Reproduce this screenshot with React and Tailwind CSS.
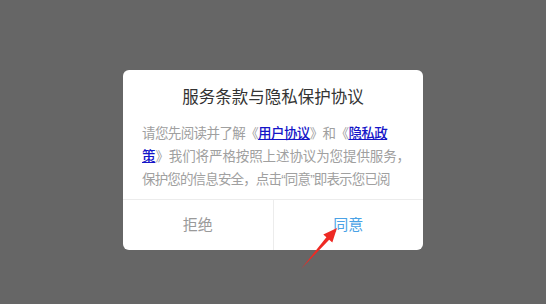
const Link = ({ children }) => (
  <a className="text-[#1515c8] underline font-medium">{children}</a>
);

export default function App() {
  return (
    <div
      className="relative h-[304px] w-full overflow-hidden bg-[#666666] pt-[70px] flex justify-center"
      style={{ fontFamily: '"Liberation Sans", "Noto Sans CJK SC", sans-serif' }}
    >
      <div className="w-[300px] h-[180px] bg-white rounded-[6px] flex flex-col overflow-hidden">
        <h2 className="pt-[15px] text-center text-[16.5px] leading-[24px] text-[#333333] font-normal">
          服务条款与隐私保护协议
        </h2>

        <div className="mt-[13px] h-[69px] overflow-hidden pl-[19px] pr-[8px] text-[13.5px] leading-[23px] text-[#a0a0a0] whitespace-nowrap">
          <p className="tracking-[-0.6px]">
            请您先阅读并了解《<Link>用户协议</Link>》和《<Link>隐私政</Link>
          </p>
          <p className="tracking-[-0.1px]">
            <Link>策</Link>》我们将严格按照上述协议为您提供服务，
          </p>
          <p className="tracking-[-0.85px]">
            保护您的信息安全，点击<span className="font-['Liberation_Sans']">“</span>同意<span className="font-['Liberation_Sans']">”</span>即表示您已阅
          </p>
          <p>读并同意全部条款，并可在设置中随时查看。</p>
        </div>

        <div className="mt-auto h-[51px] border-t border-[#ececec] flex">
          <button className="flex-1 text-[15px] text-[#9a9a9a]">拒绝</button>
          <div className="w-px bg-[#ececec]" />
          <button className="flex-1 text-[15px] text-[#4aa2e6]">同意</button>
        </div>
      </div>

      {/* annotation arrow */}
      <svg className="absolute left-0 top-0 pointer-events-none" width="546" height="304" viewBox="0 0 546 304">
        <polygon
          points="301,269 329.2,239.7 332.3,242.5 337,228 323.3,234.5 326.4,237.3"
          fill="#ee2a24"
        />
      </svg>
    </div>
  );
}
